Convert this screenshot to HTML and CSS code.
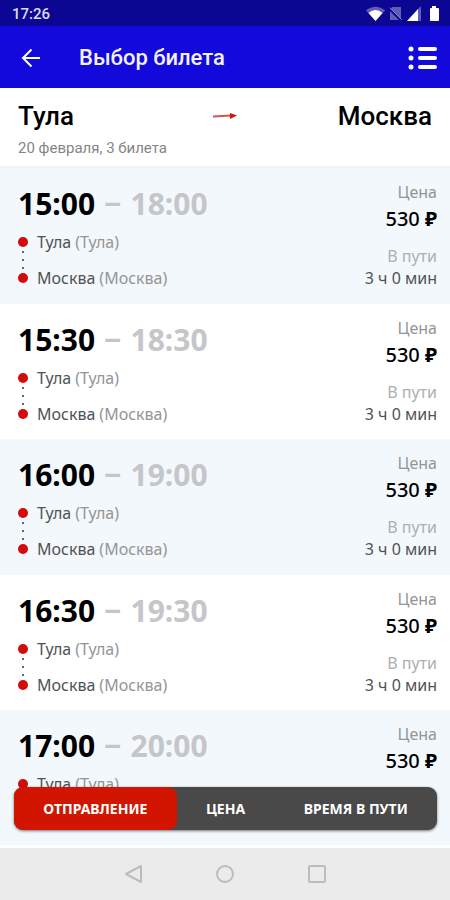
FILE: index.html
```html
<!DOCTYPE html>
<html lang="ru">
<head>
<meta charset="utf-8">
<meta name="viewport" content="width=device-width, initial-scale=1">
<title>Выбор билета</title>
<link rel="stylesheet" href="styles.css">
</head>
<body>
<div class="status">
  <span>17:26</span>
  <svg class="status-icons" width="74" height="16" viewBox="0 0 74 16" aria-hidden="true">
    <path d="M0 4.500Q9.500-3 19 4.500L9.500 15Z" fill="#fff" opacity=".35"/>
    <path d="M2.500 7Q9.500 1 16.500 7L9.500 15Z" fill="#fff"/>
    <path d="M26 1h9v12L25 3zM24 5l9 9h-9z" fill="#fff" opacity=".35"/>
    <path d="M23.500 1.500L36 14" stroke="#fff" stroke-width="1" opacity=".4"/>
    <path d="M55 0v15h-3V3z" fill="#fff" opacity=".35"/>
    <path d="M41 15L52 3v12z" fill="#fff"/>
    <path d="M66 0h4v2h2q1 0 1 1v11q0 1-1 1h-7q-1 0-1-1V3q0-1 1-1h1z" fill="#fff"/>
  </svg>
</div>
<header class="appbar">
  <button class="icon-button" type="button" aria-label="Назад">
    <svg width="20" height="20" viewBox="0 0 20 20" fill="none" stroke="#fff" stroke-width="2"><path d="M19 10H2.500M10.500 1.500L2 10l8.500 8.500"/></svg>
  </button>
  <h1 class="title">Выбор билета</h1>
  <button class="icon-button" type="button" aria-label="Список">
    <svg width="30" height="24" viewBox="0 0 30 24" fill="none" stroke="#fff" stroke-width="4" stroke-linecap="round"><path d="M12 3h15M12 12h15M12 21h15"/><path stroke-width="5" d="M3 3h.01M3 12h.01M3 21h.01"/></svg>
  </button>
</header>
<section class="route">
  <div class="route-cities">
    <span>Тула</span>
    <svg width="24" height="6" viewBox="0 0 24 6" aria-hidden="true"><path d="M0 3.500L18 2.500" stroke="#cf5550" stroke-width="2"/><path d="M17 0l7 2.500L17 6z" fill="#cc1710"/></svg>
    <span class="route-to">Москва</span>
  </div>
  <p class="route-info">20 февраля, 3 билета</p>
</section>
<main class="results">
  <ul class="trips" id="trips">
    <li class="trip">
      <div class="journey"><div class="times">15:00 <span>−</span> <span>18:00</span></div>
      <ul class="stops"><li>Тула <span>(Тула)</span></li><li>Москва <span>(Москва)</span></li></ul></div>
      <dl class="facts"><dt>Цена</dt><dd class="price">530 <b>₽</b></dd><dt class="duration-label">В пути</dt><dd>3 ч 0 мин</dd></dl>
    </li>
    <li class="trip">
      <div class="journey"><div class="times">15:30 <span>−</span> <span>18:30</span></div>
      <ul class="stops"><li>Тула <span>(Тула)</span></li><li>Москва <span>(Москва)</span></li></ul></div>
      <dl class="facts"><dt>Цена</dt><dd class="price">530 <b>₽</b></dd><dt class="duration-label">В пути</dt><dd>3 ч 0 мин</dd></dl>
    </li>
    <li class="trip">
      <div class="journey"><div class="times">16:00 <span>−</span> <span>19:00</span></div>
      <ul class="stops"><li>Тула <span>(Тула)</span></li><li>Москва <span>(Москва)</span></li></ul></div>
      <dl class="facts"><dt>Цена</dt><dd class="price">530 <b>₽</b></dd><dt class="duration-label">В пути</dt><dd>3 ч 0 мин</dd></dl>
    </li>
    <li class="trip">
      <div class="journey"><div class="times">16:30 <span>−</span> <span>19:30</span></div>
      <ul class="stops"><li>Тула <span>(Тула)</span></li><li>Москва <span>(Москва)</span></li></ul></div>
      <dl class="facts"><dt>Цена</dt><dd class="price">530 <b>₽</b></dd><dt class="duration-label">В пути</dt><dd>3 ч 0 мин</dd></dl>
    </li>
    <li class="trip trip-last">
      <div class="journey"><div class="times">17:00 <span>−</span> <span>20:00</span></div>
      <ul class="stops"><li>Тула <span>(Тула)</span></li></ul></div>
      <dl class="facts"><dt>Цена</dt><dd class="price">530 <b>₽</b></dd></dl>
    </li>
  </ul>
  <div class="sort" role="group" aria-label="Сортировка">
    <button class="sort-option sort-active" type="button" aria-pressed="true">ОТПРАВЛЕНИЕ</button>
    <button class="sort-option" type="button" aria-pressed="false">ЦЕНА</button>
    <button class="sort-option" type="button" aria-pressed="false">ВРЕМЯ В ПУТИ</button>
  </div>
</main>
<nav class="system" aria-label="Системная навигация">
  <button class="icon-button" type="button" aria-label="Назад"><svg width="18" height="18" viewBox="0 0 18 18" fill="none" stroke="#bcbcbc" stroke-width="2" stroke-linejoin="round"><path d="M17 1v16L2 9z"/></svg></button>
  <button class="icon-button" type="button" aria-label="Домой"><svg width="18" height="18" viewBox="0 0 18 18" fill="none" stroke="#bcbcbc" stroke-width="2"><circle cx="9" cy="9" r="8"/></svg></button>
  <button class="icon-button" type="button" aria-label="Недавние"><svg width="18" height="18" viewBox="0 0 18 18" fill="none" stroke="#bcbcbc" stroke-width="2"><rect x="1" y="1" width="16" height="16" rx="1"/></svg></button>
</nav>
</body>
</html>
```
FILE: styles.css
```css
* { box-sizing: border-box; margin: 0; padding: 0; }

body {
  display: flex;
  flex-direction: column;
  height: 100vh;
  overflow: hidden;
  background: #fff;
  color: #000;
  font-family: "Noto Sans", "Open Sans", sans-serif;
}

ul { list-style: none; }
svg { display: block; }
button { border: 0; font: inherit; cursor: pointer; }
.icon-button { background: none; }

.status {
  display: flex;
  justify-content: space-between;
  align-items: center;
  padding: 2px 10px 0 12px;
  height: 26px;
  flex: none;
  background: #0c0792;
  color: #dcdcf4;
  font: 500 15px/24px Roboto, sans-serif;
}

.appbar {
  display: flex;
  align-items: center;
  flex: none;
  height: 62px;
  padding: 2px 12px 0 21px;
  background: #1209da;
}

.title {
  flex: 1;
  margin-left: 38px;
  color: #f2f2ff;
  font: 500 22px/28px Roboto, sans-serif;
}

.route {
  flex: none;
  padding: 12px 18px 8px;
  border-bottom: 2px solid #f0f2f3;
  font-family: Roboto, sans-serif;
}

.route-cities {
  display: grid;
  grid-template-columns: 1fr auto 1fr;
  align-items: center;
  font-size: 26px;
  font-weight: 500;
  line-height: 32px;
}

.route-to { text-align: right; }

.route-info {
  padding-top: 6px;
  color: #858585;
  font-size: 15px;
  line-height: 20px;
}

.results {
  position: relative;
  flex: 1;
  min-height: 0;
  overflow: hidden;
  border-bottom: 3px solid #fff;
}

.trips { height: 100%; overflow: hidden; }

.trip {
  display: flex;
  justify-content: space-between;
  padding: 14px 13px 15px;
}

.trip:nth-child(odd) { background: #f3f8fc; padding-bottom: 16px; }
.trip-last { min-height: 100%; }

.journey { padding-top: 2px; }

.times {
  display: flex;
  gap: 9px;
  padding-left: 5px;
  font-size: 30px;
  font-weight: 700;
  line-height: 40px;
}

.times span { color: #c5c6c9; }

.stops {
  padding: 8px 0 0 5px;
  color: #505254;
  font-size: 16px;
  line-height: 20px;
}

.stops li {
  display: flex;
  align-items: center;
  gap: 4px;
  position: relative;
  margin-bottom: 16px;
}

.stops li:last-child { margin-bottom: 0; }

.stops li::before {
  content: "";
  width: 10px;
  height: 10px;
  margin-right: 5px;
  border-radius: 50%;
  background: #d20c0c;
}

.stops li + li::after {
  content: "";
  position: absolute;
  left: 4px;
  bottom: 19px;
  width: 2px;
  height: 18px;
  background: repeating-linear-gradient(#63666a 0 2px, transparent 2px 8px);
}

.stops span { color: #939598; }

.facts {
  text-align: right;
  color: #505254;
  font-size: 16px;
  line-height: 20px;
}

.facts dt { color: #939598; }
.facts .duration-label { color: #adafb2; padding-top: 12px; }
.facts .price {
  padding-top: 2px;
  color: #000;
  font-size: 20px;
  font-weight: 500;
  line-height: 30px;
}
.facts dd:last-child:not(.price) { padding-top: 2px; }

.sort {
  position: absolute;
  left: 14px;
  right: 13px;
  bottom: 15px;
  display: flex;
  height: 43px;
  border-radius: 9px;
  background: #494949;
  box-shadow: 0 1px 3px #0008;
}

.sort-option {
  flex: auto;
  padding: 0 28px;
  border-radius: 9px;
  background: none;
  color: #fff;
  font-size: 14px;
  font-weight: 700;
}

.sort-active { background: #d21500; }

.system {
  display: flex;
  justify-content: center;
  align-items: center;
  gap: 74px;
  flex: none;
  height: 52px;
  background: #ebebeb;
}
```
